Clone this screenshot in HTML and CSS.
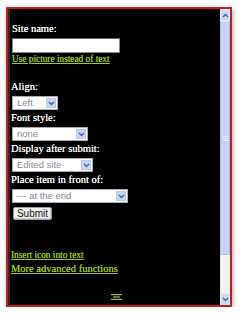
FILE: index.html
```html
<!DOCTYPE html>
<html lang="en">
<head>
  <meta charset="UTF-8" />
  <meta name="viewport" content="width=device-width, initial-scale=1.0" />
  <title>Site name settings</title>
  <link rel="stylesheet" href="styles.css">
</head>
<body>

<div class="frame">
  <form class="panel">
    <label class="lbl first" for="sitename">Site name:</label>
    <input class="field" type="text" id="sitename">
    <a class="link small" href="#">Use picture instead of text</a>

    <label class="lbl gap-big">Align:</label>
    <div class="sel w-left">
      <select><option>Left</option></select>
      <span class="arrow"><svg width="7" height="5" viewBox="0 0 7 5"><path d="M1 1 L3.5 3.5 L6 1" fill="none" stroke="#4d6185" stroke-width="1.4"/></svg></span>
    </div>

    <label class="lbl">Font style:</label>
    <div class="sel w-font">
      <select><option>none</option></select>
      <span class="arrow"><svg width="7" height="5" viewBox="0 0 7 5"><path d="M1 1 L3.5 3.5 L6 1" fill="none" stroke="#4d6185" stroke-width="1.4"/></svg></span>
    </div>

    <label class="lbl">Display after submit:</label>
    <div class="sel w-display">
      <select><option>Edited site</option></select>
      <span class="arrow"><svg width="7" height="5" viewBox="0 0 7 5"><path d="M1 1 L3.5 3.5 L6 1" fill="none" stroke="#4d6185" stroke-width="1.4"/></svg></span>
    </div>

    <label class="lbl">Place item in front of:</label>
    <div class="sel w-place">
      <select><option>--- at the end</option></select>
      <span class="arrow"><svg width="7" height="5" viewBox="0 0 7 5"><path d="M1 1 L3.5 3.5 L6 1" fill="none" stroke="#4d6185" stroke-width="1.4"/></svg></span>
    </div>

    <button class="btn" type="submit">Submit</button>

    <a class="link small gap-links" href="#">Insert icon into text</a>
    <a class="link big" href="#">More advanced functions</a>

    <div class="grip">
      <svg width="11" height="6" viewBox="0 0 11 6">
        <rect x="0" y="0" width="11" height="1.2" fill="#a3bf4a"/>
        <rect x="2" y="2.4" width="7" height="1.2" fill="#a3bf4a"/>
        <rect x="0" y="4.8" width="11" height="1.2" fill="#a3bf4a"/>
      </svg>
    </div>
  </form>

  <div class="scrollbar">
    <div class="sb-btn"><svg width="7" height="5" viewBox="0 0 7 5"><path d="M1 4 L3.5 1.5 L6 4" fill="none" stroke="#4d6185" stroke-width="1.3"/></svg></div>
    <div class="sb-thumb"><span></span><span></span><span></span></div>
    <div class="sb-track"></div>
    <div class="sb-btn"><svg width="7" height="5" viewBox="0 0 7 5"><path d="M1 1 L3.5 3.5 L6 1" fill="none" stroke="#4d6185" stroke-width="1.3"/></svg></div>
  </div>
</div>

</body>
</html>
```
FILE: styles.css
```css
body {
  margin: 0;
  background: #fff;
  font-family: 'Liberation Serif', 'Times New Roman', serif;
}
.frame {
  margin: 7px 0 0 6px;
  width: 222px;
  height: 296px;
  border: 2px solid #cc1a1a;
  display: flex;
  box-shadow: 1px 2px 4px rgba(0, 0, 0, .35);
}
.panel {
  flex: 1;
  margin: 0;
  background: #000;
  border-left: 2px solid #2b2b2b;
  padding: 14px 0 0 2px;
  display: flex;
  flex-direction: column;
  align-items: flex-start;
}
.lbl {
  display: block;
  color: #fff;
  font-size: 10.5px;
  line-height: 12px;
  margin-top: 2px;
  margin-left: -1px;
  text-shadow: 0 0 .6px #fff;
}
.lbl.first {
  margin-top: 0;
  margin-left: 0;
}
.lbl.gap-big {
  margin-top: 17px;
}
.field {
  box-sizing: border-box;
  width: 108px;
  height: 15px;
  margin: 3px 0 0;
  padding: 0 2px;
  border: 1px solid #8c8c8c;
  border-top-color: #6a6a6a;
  background: #fff;
}
.link {
  color: #9ccc14;
  text-decoration: underline;
  display: block;
  text-shadow: 0 0 .6px #9ccc14;
}
.link.small {
  font-size: 9.3px;
  line-height: 10px;
  margin-top: 1px;
}
.link.big {
  font-size: 10.5px;
  line-height: 12px;
  margin-top: 2.5px;
  margin-left: -1px;
}
.link.gap-links {
  margin-top: 30px;
  margin-left: -1px;
}
.sel {
  box-sizing: border-box;
  height: 14px;
  margin-top: 3px;
  border: 1px solid #a5acb5;
  background: #fff;
  display: flex;
  padding: 1px;
}
.sel select {
  flex: 1;
  min-width: 0;
  appearance: none;
  -webkit-appearance: none;
  border: none;
  outline: none;
  background: transparent;
  padding: 0 0 0 3px;
  margin: 0;
  font-family: 'Liberation Sans', Arial, sans-serif;
  font-size: 9.5px;
  line-height: 10px;
  height: 10px;
  color: #8a8494;
}
.sel .arrow {
  width: 10px;
  background: #c5d5fb;
  border: 1px solid #b4c6f1;
  box-sizing: border-box;
  display: flex;
  align-items: center;
  justify-content: center;
}
.w-left { width: 46px; }
.w-font { width: 76px; }
.w-display { width: 81px; }
.w-place { width: 116px; }
.btn {
  margin: 4px 0 0 1px;
  width: 39px;
  height: 13px;
  padding: 0;
  border: 1px solid #9a9a9a;
  border-radius: 2px;
  background: #f1f1ee;
  font-family: 'Liberation Sans', Arial, sans-serif;
  font-size: 10px;
  line-height: 11px;
  color: #111;
  box-shadow: inset -1px -1px 0 #d0d0cc;
}
.grip {
  align-self: center;
  margin-top: 19px;
  line-height: 0;
}
.scrollbar {
  width: 10px;
  background: #f4f4ef;
  display: flex;
  flex-direction: column;
}
.sb-btn {
  height: 12px;
  background: #c8d8fb;
  border: 1px solid #e9eefb;
  box-sizing: border-box;
  display: flex;
  align-items: center;
  justify-content: center;
}
.sb-thumb {
  height: 234px;
  background: #c3d4fb;
  border: 1px solid #aebde6;
  border-top-color: #dde6fb;
  box-sizing: border-box;
  display: flex;
  flex-direction: column;
  justify-content: center;
  align-items: center;
  gap: 1px;
}
.sb-thumb span {
  width: 5px;
  height: 1px;
  background: #eef3fe;
}
.sb-track {
  flex: 1;
  border-left: 1px solid #e6e6e0;
}
```
